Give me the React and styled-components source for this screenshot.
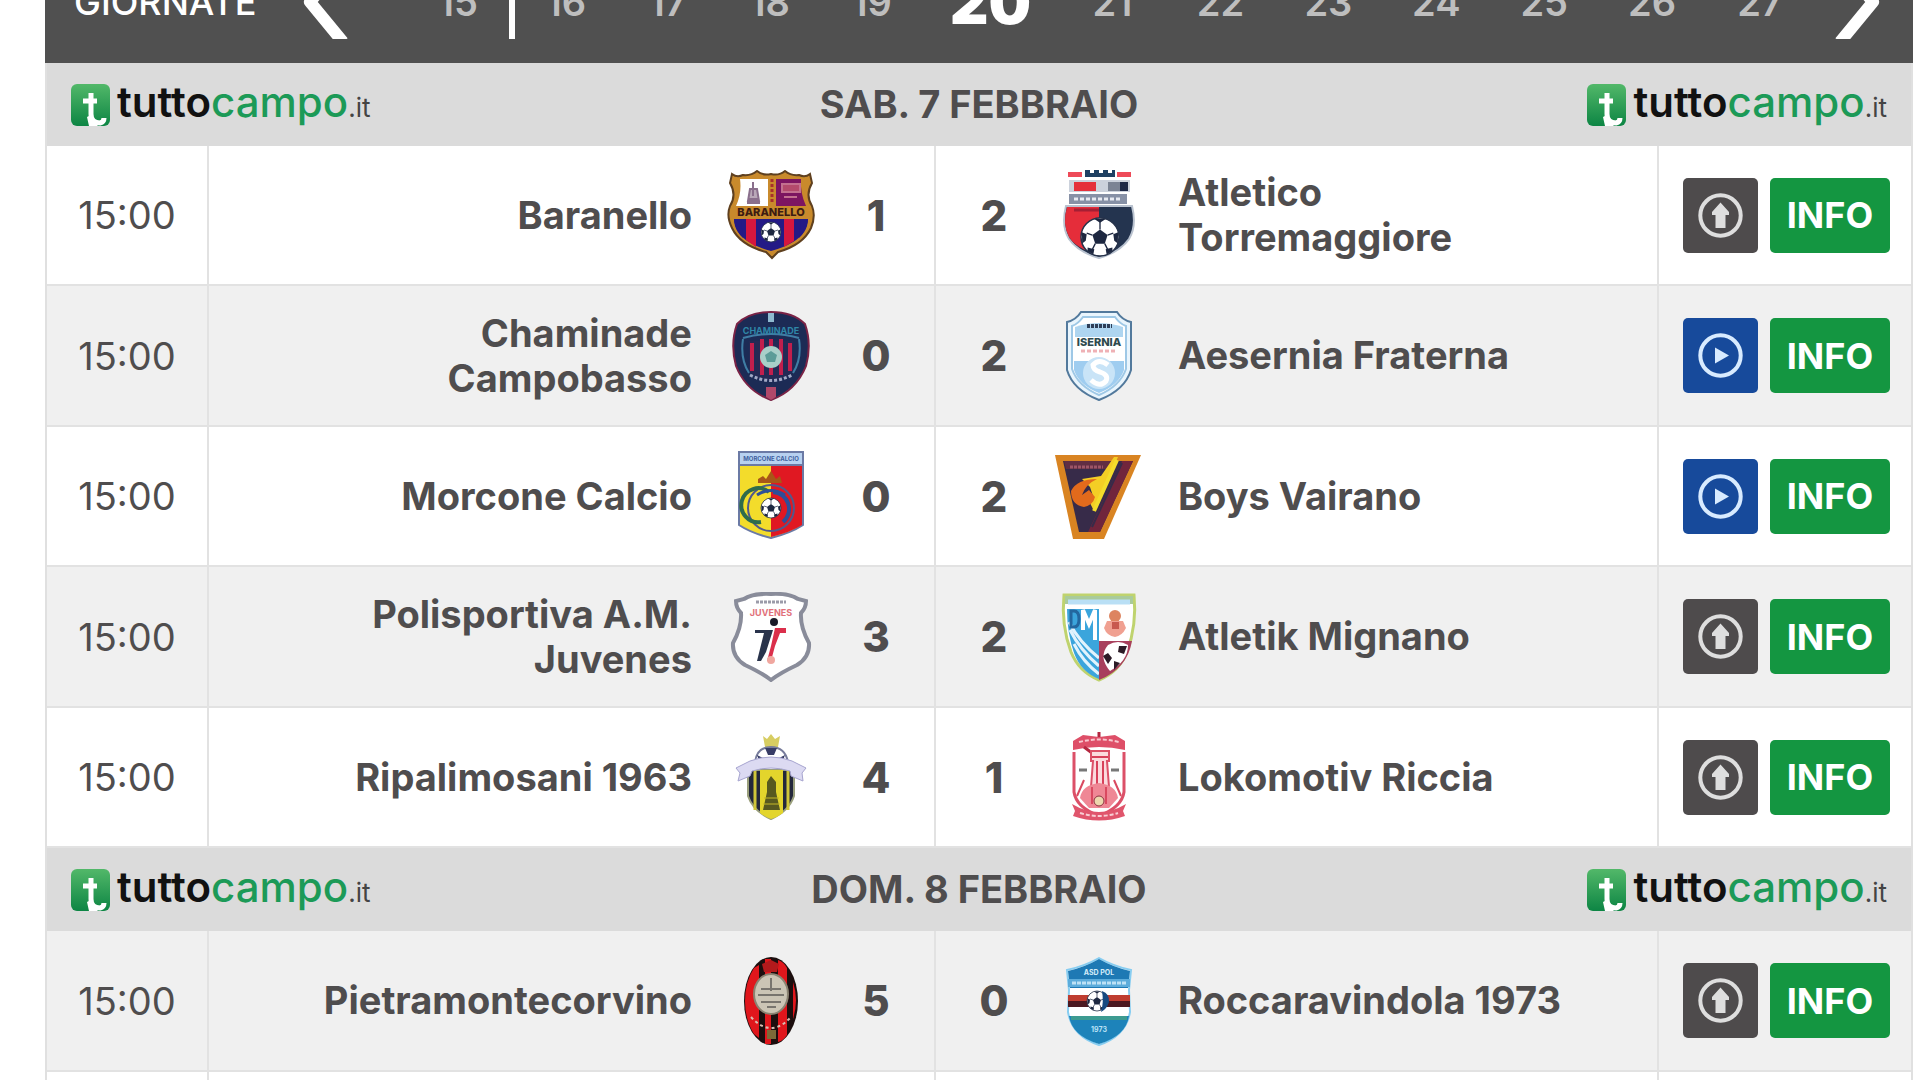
import React from 'react';
import styled, { createGlobalStyle } from 'styled-components';

const GlobalStyle = createGlobalStyle`
  * {
    box-sizing: border-box;
  }

  body {
    margin: 0;
    background: #fff;
    color: #4f4d4e;
    font-family: Inter, 'Liberation Sans', sans-serif;
  }
`;

const Page = styled.main`
  height: 100vh;
  overflow: hidden;
  padding: 0 7px 0 45px;
`;

const RoundNav = styled.nav`
  display: flex;
  align-items: center;
  height: 122px;
  margin-top: -59px;
  padding: 0 32px 0 29px;
  background: #505050;
  color: #fff;
`;

const NavLabel = styled.span`
  width: 228px;
  font-size: 36px;
  font-weight: 500;
`;

const ArrowButton = styled.button`
  display: block;
  width: 48px;
  height: 74px;
  padding: 0;
  border: 0;
  background: none;
  color: inherit;
`;

const Rounds = styled.div`
  display: flex;
  flex: 1;
  align-items: center;
  margin: 0 19px 0 57px;
`;

const Round = styled.button`
  flex: ${({ $weight }) => $weight} 1 0;
  height: 74px;
  padding: 0;
  border: 0;
  border-right: ${({ $divider }) => ($divider ? '6px solid #fff' : '0')};
  background: none;
  color: ${({ $active }) => ($active ? '#fff' : '#bebebe')};
  font-family: inherit;
  font-size: ${({ $active }) => ($active ? '60px' : '38px')};
  font-weight: ${({ $active }) => ($active ? '900' : '600')};
`;

const Matches = styled.table`
  width: 100%;
  border-collapse: separate;
  border-spacing: 0;
  border: solid #e0e0e0;
  border-width: 0 2px;
  table-layout: fixed;
`;

const TimeCol = styled.col`
  width: 162px;
`;

const HomeCol = styled.col`
  width: 39%;
`;

const ActionsCol = styled.col`
  width: 252px;
`;

const DayCell = styled.th`
  height: 83px;
  padding: 0 24px;
  background: #dbdbdb;
`;

const DayBar = styled.div`
  display: flex;
  align-items: center;
  justify-content: space-between;
`;

const DayTitle = styled.span`
  font-size: 38px;
  font-weight: 700;
  line-height: 45px;
`;

const Brand = styled.a`
  display: flex;
  align-items: center;
  gap: 7px;
  color: #111;
  font-size: 42px;
  font-weight: 600;
  line-height: 42px;
  text-decoration: none;
`;

const BrandGreen = styled.span`
  color: #1c9a57;
  font-weight: 500;
`;

const BrandSuffix = styled.span`
  color: #444;
  font-size: 26px;
  font-weight: 400;
`;

const Row = styled.tr`
  height: ${({ $tinted }) => ($tinted ? '141px' : '140px')};
  background: ${({ $tinted }) => ($tinted ? '#f0f0f0' : '#fff')};
`;

const Cell = styled.td`
  padding: 0;
  border-bottom: 2px solid #e2e2e2;
  border-right: 2px solid #e2e2e2;

  &:last-child {
    border-right: 0;
  }
`;

const TimeCell = styled(Cell)`
  font-size: 38px;
  text-align: center;
`;

const Side = styled.div`
  display: flex;
  align-items: center;
  gap: 30px;
  padding: 0 28px;
`;

const TeamName = styled.span`
  flex: 1;
  padding: 0 4px;
  font-size: 38px;
  font-weight: 700;
  line-height: 45px;
  text-align: ${({ $align }) => $align};
`;

const Wrap = styled.span`
  display: inline-block;
  max-width: 420px;
`;

const Score = styled.span`
  width: 60px;
  font-size: 42px;
  font-weight: 800;
  text-align: center;
`;

const Crest = styled.svg`
  display: block;
  flex: none;
  width: 90px;
  height: 90px;
`;

const Actions = styled.div`
  display: flex;
  gap: 12px;
  padding-left: 24px;
`;

const IconButton = styled.button`
  display: grid;
  place-items: center;
  width: 75px;
  height: 75px;
  padding: 0;
  border: 0;
  border-radius: 5px;
  background: ${({ $video }) => ($video ? '#174a9b' : '#4e4b4c')};
  color: ${({ $video }) => ($video ? '#d8ebff' : '#dedede')};
`;

const InfoLink = styled.a`
  display: grid;
  place-items: center;
  width: 120px;
  height: 75px;
  border-radius: 5px;
  background: #149641;
  color: #fff;
  font-size: 36px;
  font-weight: 700;
  text-decoration: none;
`;

function Ball({ cx, cy, r }) {
  return (
    <g transform={`translate(${cx} ${cy}) scale(${r / 10})`}>
      <circle r="10" fill="#fff" stroke="#26324a" strokeWidth="0.8" />
      <path d="M0-4 4-1 2.5 3.5h-5L-4-1Z" fill="#1d2740" />
      <path
        d="M-3-9.5 0-7.5 3-9.5ZM9.5-2.5 7-1.5 7.5 2 9.4 3.4ZM-9.5-2.5-7-1.5-7.5 2-9.4 3.4ZM3 6.5 6.5 5.5 6.6 7.5 3.5 9.2ZM-3 6.5-6.5 5.5-6.6 7.5-3.5 9.2Z"
        fill="#1d2740"
      />
      <path d="M0-4v-4M4-1l3-1M2.5 3.5l1.5 3M-2.5 3.5-4 6.5M-4-1l-3-1" stroke="#1d2740" strokeWidth="0.7" />
    </g>
  );
}

function Baranello() {
  return (
    <Crest viewBox="0 0 90 90" aria-hidden="true">
      <path
        d="M6 4q5 4 11 1 8 1 14-4 6 5 14 3 8 2 14-3 6 5 14 4 6 3 11-1l2 9q-7 12 0 23 4 10-1 22-8 17-33 24l-6 6-6-6Q14 75 6 58 0 46 4 36q7-11 0-23Z"
        fill="#c98a2c"
        stroke="#5f401f"
        strokeWidth="2"
      />
      <path d="M14 9h28v27H10q6-13 4-27Z" fill="#fff" />
      <path d="M50 9h25q-1 14 5 27H50Z" fill="#7d1561" />
      <path d="M27 12v14m-4 3h9m-11 4h13m-10-14h7l2 12h-11Z" stroke="#8a6f8c" strokeWidth="2" fill="#b9a8b8" />
      <path d="M56 14h18v8H56Zm2 13h13" stroke="#c4708f" strokeWidth="2" fill="#b44a6c" />
      <path d="M46 9v25" stroke="#a8302a" strokeWidth="3" strokeDasharray="3 2" />
      <path d="M8 49h74q0 14-15 23-10 6-22 9-12-3-22-9Q8 63 8 49Z" fill="#241a86" />
      <path d="M20 49h10v28l-10-7ZM58 49h10v22l-10 6Z" fill="#d6173e" />
      <path d="M8 49q1 11 9 19l-2-19ZM82 49q-1 11-9 19l2-19Z" fill="#241a86" />
      <text x="45" y="46" fontSize="11" fontWeight="800" textAnchor="middle" fill="#3d1c12">
        BARANELLO
      </text>
      <Ball cx={45} cy={62} r={10} />
    </Crest>
  );
}

function Torremaggiore() {
  return (
    <Crest viewBox="0 0 90 90" aria-hidden="true">
      <path d="M14 2h14v5H14ZM63 2h14v5H63Z" fill="#ee4a58" />
      <path d="M31 0h5v3h4V0h5v3h4V0h5v3h4V0h3v7H31Z" fill="#1f4062" />
      <path d="M15 10h61v12H15Z" fill="#ccd2dc" />
      <path d="M20 12h22v9H20Z" fill="#e5303b" />
      <path d="M54 12h12v9H54Z" fill="#7c8494" />
      <path d="M66 12h8v9h-8Z" fill="#1c2846" />
      <path d="M15 24h58v10H15Z" fill="#8791a6" />
      <path d="M20 29h48" stroke="#e8ebf2" strokeWidth="3" strokeDasharray="4 2" />
      <path d="M12 36h66q5 20-3 33-9 13-30 19-21-6-30-19-8-13-3-33Z" fill="#24344f" stroke="#b9c2cf" strokeWidth="2" />
      <path d="M13 37h32v10L31 80Q20 75 15 67q-7-13-2-30Z" fill="#e52d3a" />
      <path d="M20 40h25" stroke="#a51f34" strokeWidth="3" />
      <Ball cx={46} cy={67} r={19} />
    </Crest>
  );
}

function Chaminade() {
  return (
    <Crest viewBox="0 0 90 90" aria-hidden="true">
      <path
        d="M45 1q22 0 34 12 7 20 1 42-10 25-35 34Q20 80 10 55 4 33 11 13 23 1 45 1Z"
        fill="#1c2b55"
        stroke="#7a2346"
        strokeWidth="2"
      />
      <path d="M42 2h6v9h-6Z" fill="#8fbad0" />
      <path d="M23 30h44v30q-8 9-22 10-14-1-22-10Z" fill="#242a55" />
      <path d="M26 32v28m10-32v36m9-36v36m10-36v36m9-32v28" stroke="#c11f4d" strokeWidth="4" />
      <path d="M17 27q28-8 56 0M17 28q-3 20 6 34m50-34q3 20-6 34" stroke="#3f7ea5" strokeWidth="2" fill="none" />
      <text x="45" y="23" fontSize="9" fontWeight="700" textAnchor="middle" fill="#2f87a8">
        CHAMINADE
      </text>
      <circle cx="45" cy="46" r="11" fill="#a9cfc9" />
      <path d="M45 40l6 4-2 7h-8l-2-7Z" fill="#5c9c98" />
      <path d="M24 64q21 11 42 0" stroke="#a1a9c6" strokeWidth="3" strokeDasharray="3 2" fill="none" />
      <path d="M40 76h10v10l-5 3-5-3Z" fill="#b0486a" />
    </Crest>
  );
}

function Aesernia() {
  return (
    <Crest viewBox="0 0 90 90" aria-hidden="true">
      <path
        d="M27 1h36q5 8 14 10v48Q71 79 45 89 19 79 13 59V11q9-2 14-10Z"
        fill="#e9f5fd"
        stroke="#52799c"
        strokeWidth="2"
      />
      <path d="M29 6h32q5 7 11 9v43q-6 17-27 26-21-9-27-26V15q6-2 11-9Z" fill="#fff" stroke="#9ec8e6" strokeWidth="2" />
      <path d="M21 16q24-8 48 0v10H21Z" fill="#aed5f0" />
      <path d="M33 15h25" stroke="#2f3f58" strokeWidth="4" strokeDasharray="3 1" />
      <text x="45" y="35" fontSize="11" fontWeight="800" textAnchor="middle" fill="#2e4a4e">
        ISERNIA
      </text>
      <path d="M27 40h36" stroke="#efb1b5" strokeWidth="3" strokeDasharray="4 2" />
      <path d="M20 50h50v9q-5 15-25 23Q25 74 20 59Z" fill="#9fcdf0" />
      <circle cx="45" cy="62" r="16" fill="#c9e4f7" />
      <path d="M54 54q-9-7-15 0 0 5 7 7 9 3 6 9-6 7-15-1" fill="none" stroke="#fff" strokeWidth="5" />
    </Crest>
  );
}

function Morcone() {
  return (
    <Crest viewBox="0 0 90 90" aria-hidden="true">
      <path d="M13 1h64v73q-12 8-32 13-20-5-32-13Z" fill="#f3dc2b" stroke="#6b7aa5" strokeWidth="2" />
      <path d="M45 14h31v60q-11 7-31 12Z" fill="#e01822" />
      <path d="M13 1h64v13H13Z" fill="#b7d1f0" stroke="#6b7aa5" strokeWidth="2" />
      <text x="45" y="10" fontSize="6" fontWeight="700" textAnchor="middle" fill="#3e5f9e">
        MORCONE CALCIO
      </text>
      <path d="M32 28l5-3 3 3 5-8 5 8 4-3 2 7H32Z" fill="#a85718" />
      <circle cx="45" cy="57" r="23" fill="none" stroke="#51598c" strokeWidth="2" />
      <path d="M43 41a17 17 0 1 0-8 30" fill="none" stroke="#2f6b4c" strokeWidth="4" />
      <path d="M47 41a17 17 0 0 1 10 30" fill="none" stroke="#2e4f99" strokeWidth="4" />
      <path d="M31 44q14-9 28 0" fill="none" stroke="#2e4f99" strokeWidth="3" />
      <Ball cx={45} cy={57} r={10} />
    </Crest>
  );
}

function BoysVairano() {
  return (
    <Crest viewBox="0 0 90 90" aria-hidden="true">
      <path d="M1 4h86L50 88H19Z" fill="#d98422" />
      <path d="M9 10h70L46 81H25Z" fill="#372b49" />
      <path d="M10 10h54l-3 8H12Z" fill="#612e43" />
      <path d="M16 16h33" stroke="#9d5567" strokeWidth="3" strokeDasharray="3 1" />
      <path d="M68 10h11L46 81H34Z" fill="#71253c" />
      <path d="M68 12 38 76" stroke="#372b49" strokeWidth="2" />
      <path d="M60 6h4L40 60l-6-12 5-3-3-9-8-8 19-3Z" fill="#f4ce25" />
      <path d="M43 28q-20 0-26 12 0 14 13 16 9-2 11-10l-6-7-7 5q4-11 15-16Z" fill="#e26a1c" />
      <path d="M40 60 63 9" stroke="#f4dc2b" strokeWidth="4" />
    </Crest>
  );
}

function Juvenes() {
  return (
    <Crest viewBox="0 0 90 90" aria-hidden="true">
      <path
        d="M45 2q18-1 27 5l8 2q0 7-5 12-1 14 8 30 1 14-12 22-17 8-26 15-9-7-26-15Q6 65 7 51q9-16 8-30-5-5-5-12l8-2q9-6 27-5Z"
        fill="#fff"
        stroke="#898c9a"
        strokeWidth="4"
      />
      <path d="M30 10h30" stroke="#9b9ba9" strokeWidth="3" strokeDasharray="3 1" />
      <text x="45" y="24" fontSize="9" fontWeight="700" textAnchor="middle" fill="#e1707a">
        JUVENES
      </text>
      <circle cx="48" cy="30" r="4" fill="#1a1a28" />
      <path d="M29 38h18l-7 22-5 9h-4l7-28h-9Z" fill="#29334b" />
      <path d="M49 36h11v5h-6l-5 13-4 15h-4l4-15Z" fill="#db2f4b" />
      <circle cx="45" cy="68" r="4" fill="#f0a79f" />
    </Crest>
  );
}

function Mignano() {
  return (
    <Crest viewBox="0 0 90 90" aria-hidden="true">
      <path d="M10 3h70q3 30-7 57-8 20-28 28-20-8-28-28Q7 33 10 3Z" fill="#fff" stroke="#bfd36e" strokeWidth="3" />
      <path d="M11 4h68v8H11Z" fill="#a9cb9b" />
      <path d="M14 10h62" stroke="#b9dff5" strokeWidth="5" />
      <path d="M13 17h32v70q-18-7-25-26-7-20-7-44Z" fill="#3ba5dc" />
      <path d="M16 38q10 20 29 36M20 52q9 18 25 30M15 30q10 20 30 36" stroke="#e1f3fd" strokeWidth="3" fill="none" />
      <path d="M17 19v16h3q5 0 5-8t-5-8Z" fill="none" stroke="#23679f" strokeWidth="3" />
      <path d="M29 38V18l6 14 6-14v30" fill="none" stroke="#fff" strokeWidth="4" />
      <circle cx="61" cy="24" r="6" fill="#dd8460" />
      <path d="M53 29h16l3 7q-4 8-11 9-8-1-11-9Z" fill="#f0a091" />
      <path d="M58 30h7v7h-7Z" fill="#c85a50" />
      <path d="M45 49h33q-5 28-33 39Z" fill="#a83f5c" />
      <path d="M54 53q10-6 20 0 0 16-18 26-12-14-2-26Z" fill="#fff" />
      <path d="M65 54h8l-3 8-6-2ZM49 64l5-3 4 5-4 6ZM60 69l6 2-6 7Z" fill="#2c1c27" />
    </Crest>
  );
}

function Ripalimosani() {
  return (
    <Crest viewBox="0 0 90 90" aria-hidden="true">
      <path d="M37 4l4 3 4-5 4 5 5-3-2 11H39Z" fill="#d7cd62" />
      <path d="M29 30q2-15 16-15t17 15Z" fill="#fff" stroke="#767b9b" strokeWidth="2" />
      <path d="M39 16h12l-3 7h-6ZM31 23l6 3-3 5ZM59 23l-6 3 3 5Z" fill="#373c66" />
      <path d="M22 38h46v26q-5 15-23 23-18-8-23-23Z" fill="#24283b" stroke="#9a9f7c" strokeWidth="2" />
      <path d="M34 38h23v43q-5 4-12 6-6-2-11-6Z" fill="#e3d52c" />
      <path d="M29 38v40M62 38v40" stroke="#d0c63a" strokeWidth="3" />
      <path d="M41 50l4-6 5 6v10l4 18H37l4-18Z" fill="#58591f" />
      <path d="M38 66h15M37 72h17" stroke="#c5b929" strokeWidth="1" />
      <path d="M10 36l14-7q21-8 42 0l14 7-4 5 1 8-12-5-1-5q-19-6-38 0l-2 5-12 5 2-8Z" fill="#dcdaf2" stroke="#a6a4cf" strokeWidth="1" />
    </Crest>
  );
}

function Lokomotiv() {
  return (
    <Crest viewBox="0 0 90 90" aria-hidden="true">
      <path d="M20 20v40q2 15 25 24 23-9 25-24V20" fill="#fff" stroke="#dc5068" strokeWidth="3" />
      <path d="M19 9l10-6 16 2 16-2 10 6v9q-26-6-52 0Z" fill="#de4f68" />
      <path d="M25 10q20-5 40 0" stroke="#f8c8cf" strokeWidth="2" strokeDasharray="4 2" fill="none" />
      <path d="M45 0v5M30 15l8 6" stroke="#b52740" strokeWidth="3" />
      <path d="M37 19h18v10h-2l2 26H37l2-26h-2Z" fill="#fbdade" stroke="#dc5068" strokeWidth="2" />
      <path d="M43 29v25M49 29v25M38 25h16" stroke="#d8405a" strokeWidth="2" />
      <path d="M26 66q2-13 19-15 17 2 19 15l-9 10H35Z" fill="#ef8795" />
      <path d="M30 48 23 64M60 48l7 16M38 55v17m14-17v17" stroke="#d94960" strokeWidth="2" />
      <circle cx="45" cy="69" r="5" fill="#edd7ae" stroke="#8a3340" />
      <path d="M25 38h8m24 0h8" stroke="#777" strokeWidth="3" />
      <path d="M18 72q27 16 54 0l-3 7 2 5q-26 9-52 0l2-5Z" fill="#e0556c" />
      <path d="M26 81q19 6 38 0" stroke="#f8ced4" strokeWidth="2" strokeDasharray="4 2" fill="none" />
    </Crest>
  );
}

function Pietramontecorvino() {
  return (
    <Crest viewBox="0 0 90 90" aria-hidden="true">
      <ellipse cx="45" cy="45" rx="27" ry="44" fill="#1c0e0e" />
      <path d="M28 12q-9 14-9 33t9 33l5 4V9ZM39 3h6v85h-6ZM52 4q6 2 9 8v67q-4 6-9 7ZM67 26q6 18 0 37Z" fill="#e0161c" />
      <path d="M36 8l9-4 8 4-2 8H38Z" fill="#b31a1c" />
      <ellipse cx="45" cy="38" rx="17" ry="20" fill="#cbc5b5" stroke="#8a8372" strokeWidth="2" />
      <path d="M45 22v13M35 33h20M32 39h26M35 46h20M41 51h9" stroke="#78756e" strokeWidth="2" />
      <path d="M25 61q20 22 40 0" stroke="#dabdb1" strokeWidth="2" strokeDasharray="3 3" fill="none" />
      <path d="M41 74h9v9h-9Z" fill="#7d6a38" />
    </Crest>
  );
}

function Roccaravindola() {
  return (
    <Crest viewBox="0 0 90 90" aria-hidden="true">
      <path d="M45 2q14 8 32 12l-2 20 1 22q-4 24-31 33-27-9-31-33l1-22-2-20Q31 10 45 2Z" fill="#fff" stroke="#87cdf1" strokeWidth="2" />
      <path d="M45 3q14 8 31 12l-2 17H16l-2-17Q31 11 45 3Z" fill="#1e79b4" />
      <text x="45" y="19" fontSize="7" fontWeight="700" textAnchor="middle" fill="#d5edf9">
        ASD POL
      </text>
      <path d="M14 23h62v8H14Z" fill="#5cacdb" />
      <path d="M18 27h54" stroke="#bee2f5" strokeWidth="3" strokeDasharray="4 1" />
      <path d="M14 39h62v6H14Z" fill="#bf3d30" />
      <path d="M14 45h62v6H14Z" fill="#4b1820" />
      <path d="M15 60h60q-3 20-30 28-27-8-30-28Z" fill="#1d83ba" />
      <path d="M17 62h56" stroke="#3d9b91" strokeWidth="4" />
      <Ball cx={43} cy={45} r={10} />
      <path d="M48 35q8 3 7 11-2 7-8 10 3-10 1-21Z" fill="#174a80" />
      <text x="45" y="76" fontSize="7" fontWeight="700" textAnchor="middle" fill="#b9e1f6">
        1973
      </text>
    </Crest>
  );
}

const rounds = [15, 16, 17, 18, 19, 20, 21, 22, 23, 24, 25, 26, 27];

const days = [
  {
    title: 'SAB. 7 FEBBRAIO',
    matches: [
      { home: 'Baranello', HomeCrest: Baranello, score: [1, 2], away: 'Atletico Torremaggiore', AwayCrest: Torremaggiore },
      { home: 'Chaminade Campobasso', HomeCrest: Chaminade, score: [0, 2], away: 'Aesernia Fraterna', AwayCrest: Aesernia, video: true, tinted: true },
      { home: 'Morcone Calcio', HomeCrest: Morcone, score: [0, 2], away: 'Boys Vairano', AwayCrest: BoysVairano, video: true },
      { home: 'Polisportiva A.M. Juvenes', HomeCrest: Juvenes, score: [3, 2], away: 'Atletik Mignano', AwayCrest: Mignano, tinted: true },
      { home: 'Ripalimosani 1963', HomeCrest: Ripalimosani, score: [4, 1], away: 'Lokomotiv Riccia', AwayCrest: Lokomotiv }
    ]
  },
  {
    title: 'DOM. 8 FEBBRAIO',
    matches: [
      { home: 'Pietramontecorvino', HomeCrest: Pietramontecorvino, score: [5, 0], away: 'Roccaravindola 1973', AwayCrest: Roccaravindola, tinted: true }
    ]
  }
];

function roundWeight(round) {
  if (round === 20) return 136;
  return round < 20 ? 102 : 108;
}

function TuttocampoLogo() {
  return (
    <Brand href="#tuttocampo" aria-label="tuttocampo.it">
      <svg width="39" height="42" viewBox="0 0 39 42" aria-hidden="true">
        <defs>
          <linearGradient id="tile" x1="0" y1="0" x2="0" y2="1">
            <stop offset="0" stopColor="#52b869" />
            <stop offset="1" stopColor="#0d8544" />
          </linearGradient>
        </defs>
        <rect width="39" height="42" rx="6" fill="url(#tile)" />
        <path d="M20 9v21q0 9 9 9 4-1 4-5M12 17h14" fill="none" stroke="#fff" strokeWidth="5" />
        <path d="M20 31q0 8 8 9l-2 2h-8l-2-9Z" fill="#fff" />
      </svg>
      <span>
        tutto<BrandGreen>campo</BrandGreen>
        <BrandSuffix>.it</BrandSuffix>
      </span>
    </Brand>
  );
}

function MatchRow({ match }) {
  const { home, HomeCrest, score, away, AwayCrest, video, tinted } = match;

  return (
    <Row $tinted={tinted}>
      <TimeCell>15:00</TimeCell>
      <Cell>
        <Side>
          <TeamName $align="right">
            <Wrap>{home}</Wrap>
          </TeamName>
          <HomeCrest />
          <Score>{score[0]}</Score>
        </Side>
      </Cell>
      <Cell>
        <Side>
          <Score>{score[1]}</Score>
          <AwayCrest />
          <TeamName $align="left">
            <Wrap>{away}</Wrap>
          </TeamName>
        </Side>
      </Cell>
      <Cell>
        <Actions>
          <IconButton type="button" $video={video} aria-label={video ? 'Video' : 'Carica'}>
            <svg width="45" height="45" viewBox="0 0 45 45" fill="currentColor" aria-hidden="true">
              <circle cx="22.5" cy="22.5" r="20.2" fill="none" stroke="currentColor" strokeWidth="4" />
              {video ? <path d="M17 14.5 31 22.5 17 30.5Z" /> : <path d="M22.5 9.5 31 19v3h-3.500v13h-10V22H14v-3Z" />}
            </svg>
          </IconButton>
          <InfoLink href="#info">INFO</InfoLink>
        </Actions>
      </Cell>
    </Row>
  );
}

function App() {
  return (
    <Page>
      <GlobalStyle />
      <RoundNav aria-label="Giornate">
        <NavLabel>GIORNATE</NavLabel>
        <ArrowButton type="button" aria-label="Giornata precedente">
          <svg width="48" height="74" viewBox="0 0 48 74" fill="none" stroke="#fff" strokeWidth="12" strokeLinejoin="round" aria-hidden="true">
            <path d="M41-3 8 37 41 77" />
          </svg>
        </ArrowButton>
        <Rounds>
          {rounds.map(round => (
            <Round
              key={round}
              type="button"
              $weight={roundWeight(round)}
              $active={round === 20}
              $divider={round === 15}
            >
              {round}
            </Round>
          ))}
        </Rounds>
        <ArrowButton type="button" aria-label="Giornata successiva">
          <svg width="48" height="74" viewBox="0 0 48 74" fill="none" stroke="#fff" strokeWidth="12" strokeLinejoin="round" aria-hidden="true">
            <path d="M7-3 40 37 7 77" />
          </svg>
        </ArrowButton>
      </RoundNav>
      <Matches>
        <colgroup>
          <TimeCol />
          <HomeCol />
          <col />
          <ActionsCol />
        </colgroup>
        {days.map(day => (
          <tbody key={day.title}>
            <tr>
              <DayCell colSpan={4}>
                <DayBar>
                  <TuttocampoLogo />
                  <DayTitle>{day.title}</DayTitle>
                  <TuttocampoLogo />
                </DayBar>
              </DayCell>
            </tr>
            {day.matches.map(match => (
              <MatchRow key={match.home} match={match} />
            ))}
          </tbody>
        ))}
        <tbody>
          <Row>
            <Cell />
            <Cell />
            <Cell />
            <Cell />
          </Row>
        </tbody>
      </Matches>
    </Page>
  );
}

export default App;
